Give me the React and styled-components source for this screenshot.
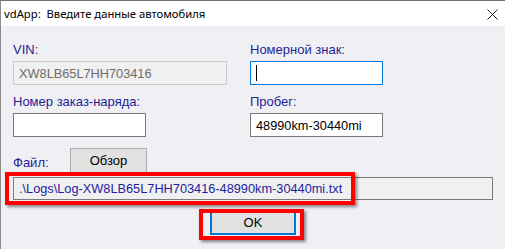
import React from "react";
import styled, { createGlobalStyle } from "styled-components";

const GlobalStyle = createGlobalStyle`
  html, body {
    margin: 0;
    padding: 0;
    background: #f0f0f4;
  }
  body {
    font-family: "Liberation Sans", Arial, sans-serif;
  }
`;

const App = () => {
  return (
    <>
      <GlobalStyle />
      <Window>
        <TitleBar>
          <Title>vdApp:  Введите данные автомобиля</Title>
          <CloseButton aria-label="close">
            <svg width="11" height="11" viewBox="0 0 11 11">
              <path d="M0.5 0.5 L10.5 10.5 M10.5 0.5 L0.5 10.5" stroke="#1a1a1a" strokeWidth="1" fill="none" />
            </svg>
          </CloseButton>
        </TitleBar>
        <Body>
          <FieldsGrid>
            <Field>
              <Label>VIN:</Label>
              <TextBox $width={214} $disabled value="XW8LB65L7HH703416" readOnly />
            </Field>
            <Field>
              <Label>Номерной знак:</Label>
              <TextBox $width={133} $focused value="" readOnly />
              <Caret />
            </Field>
            <Field>
              <Label>Номер заказ-наряда:</Label>
              <TextBox $width={133} value="" readOnly />
            </Field>
            <Field>
              <Label>Пробег:</Label>
              <TextBox $width={133} value="48990km-30440mi" readOnly />
            </Field>
          </FieldsGrid>
          <FileRow>
            <FileLabel>Файл:</FileLabel>
            <BrowseButton>Обзор</BrowseButton>
          </FileRow>
          <PathRow>
            <PathBox>.\Logs\Log-XW8LB65L7HH703416-48990km-30440mi.txt</PathBox>
            <Highlight $left={-8} $top={-5} $width={350} $height={33} />
          </PathRow>
          <Footer>
            <OkWrap>
              <OkButton>OK</OkButton>
              <Highlight $left={-11} $top={-1} $width={105} $height={31} />
            </OkWrap>
          </Footer>
        </Body>
      </Window>
    </>
  );
};

export default App;

const Window = styled.div`
  width: 505px;
  height: 249px;
  box-sizing: border-box;
  border-top: 1px solid #6e6e6e;
  border-left: 1px solid #8a8a8a;
  background: #f0f0f4;
  overflow: hidden;
`;

const TitleBar = styled.div`
  height: 25px;
  background: #ffffff;
  display: flex;
  align-items: center;
  justify-content: space-between;
  padding: 0 7px 0 3px;
`;

const Title = styled.div`
  font-family: "Noto Sans", "Segoe UI", sans-serif;
  font-size: 11.25px;
  color: #000;
  white-space: pre;
  padding-bottom: 1px;
`;

const CloseButton = styled.div`
  width: 11px;
  height: 11px;
  display: flex;
  margin-top: 1px;
`;

const Body = styled.div`
  padding: 16px 0 0 12px;
`;

const FieldsGrid = styled.div`
  display: grid;
  grid-template-columns: 237px 133px;
  row-gap: 9px;
`;

const Field = styled.div`
  position: relative;
  display: flex;
  flex-direction: column;
`;

const Label = styled.div`
  font-size: 13px;
  line-height: 15px;
  height: 15px;
  margin-bottom: 4px;
  color: #1e1e96;
`;

const TextBox = styled.input`
  box-sizing: border-box;
  width: ${(p) => p.$width}px;
  height: 24px;
  margin: 0;
  padding: 0 5px;
  font-family: "Liberation Sans", Arial, sans-serif;
  font-size: 12.75px;
  outline: none;
  border: 1px solid ${(p) => (p.$focused ? "#0078d7" : p.$disabled ? "#cccccc" : "#7a7a7a")};
  background: ${(p) => (p.$disabled ? "#f0f0f0" : "#ffffff")};
  color: ${(p) => (p.$disabled ? "#6d6d6d" : "#000000")};
`;

const Caret = styled.span`
  position: absolute;
  left: 6px;
  top: 23px;
  width: 1px;
  height: 16px;
  background: #000;
`;

const FileRow = styled.div`
  display: flex;
  align-items: flex-end;
  margin-top: 11px;
`;

const FileLabel = styled.div`
  width: 57px;
  font-size: 13px;
  line-height: 15px;
  color: #1e1e96;
  padding-bottom: 3px;
`;

const BrowseButton = styled.div`
  box-sizing: border-box;
  width: 77px;
  height: 25px;
  background: #e1e1e1;
  border: 1px solid #adadad;
  display: flex;
  align-items: center;
  justify-content: center;
  font-size: 13px;
  color: #000;
`;

const PathRow = styled.div`
  position: relative;
  margin-top: 4px;
  width: 480px;
`;

const PathBox = styled.div`
  box-sizing: border-box;
  height: 23px;
  border: 1px solid #7a7a7a;
  background: #f0f0f0;
  padding: 0 5px;
  display: flex;
  align-items: center;
  font-size: 12.75px;
  color: #1e1ea0;
  white-space: nowrap;
`;

const Footer = styled.div`
  display: flex;
  justify-content: center;
  margin-top: 10px;
  margin-left: -12px;
`;

const OkWrap = styled.div`
  position: relative;
`;

const OkButton = styled.div`
  box-sizing: border-box;
  width: 86px;
  height: 25px;
  background: #e1e1e1;
  border: 2px solid #0078d7;
  display: flex;
  align-items: center;
  justify-content: center;
  font-size: 13px;
  color: #000;
`;

const Highlight = styled.div`
  position: absolute;
  box-sizing: border-box;
  left: ${(p) => p.$left}px;
  top: ${(p) => p.$top}px;
  width: ${(p) => p.$width}px;
  height: ${(p) => p.$height}px;
  border: 4px solid #ff0000;
  box-shadow: 2px 2px 3px rgba(0, 0, 0, 0.45);
  pointer-events: none;
`;
